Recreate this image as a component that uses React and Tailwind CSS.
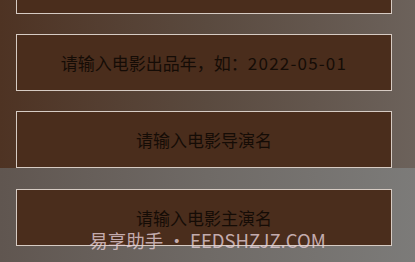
import React from "react";

const font = { fontFamily: '"Noto Sans CJK SC", "Noto Sans", sans-serif' };

function Box({ children, className = "" }) {
  return (
    <div
      className={`ml-[16px] w-[376px] h-[57px] shrink-0 border-[1.5px] border-[#d6cbc3] bg-[#4a2d1c] flex items-center justify-center text-[17px] leading-none text-[#150c06] ${className}`}
    >
      {children}
    </div>
  );
}

export default function App() {
  return (
    <div className="relative w-[415px] h-[262px] overflow-hidden" style={font}>
      <div className="h-[168px] flex flex-col gap-[20px] bg-gradient-to-r from-[#4e3323] via-[#5a4a3f] to-[#6c625b]">
        <Box className="-mt-[43px]" />
        <Box>
          请输入电影出品年，如：<span className="tracking-[1.2px]">2022-05-01</span>
        </Box>
        <Box>请输入电影导演名</Box>
      </div>
      <div className="h-[94px] pt-[21px] bg-gradient-to-r from-[#605650] via-[#6f6a66] to-[#7c7b79]">
        <Box>请输入电影主演名</Box>
      </div>
      <div className="absolute left-0 right-0 top-[227px] flex justify-center text-[18.5px] text-[#e4cfd6]/80">
        易享助手 • EEDSHZJZ.COM
      </div>
    </div>
  );
}
